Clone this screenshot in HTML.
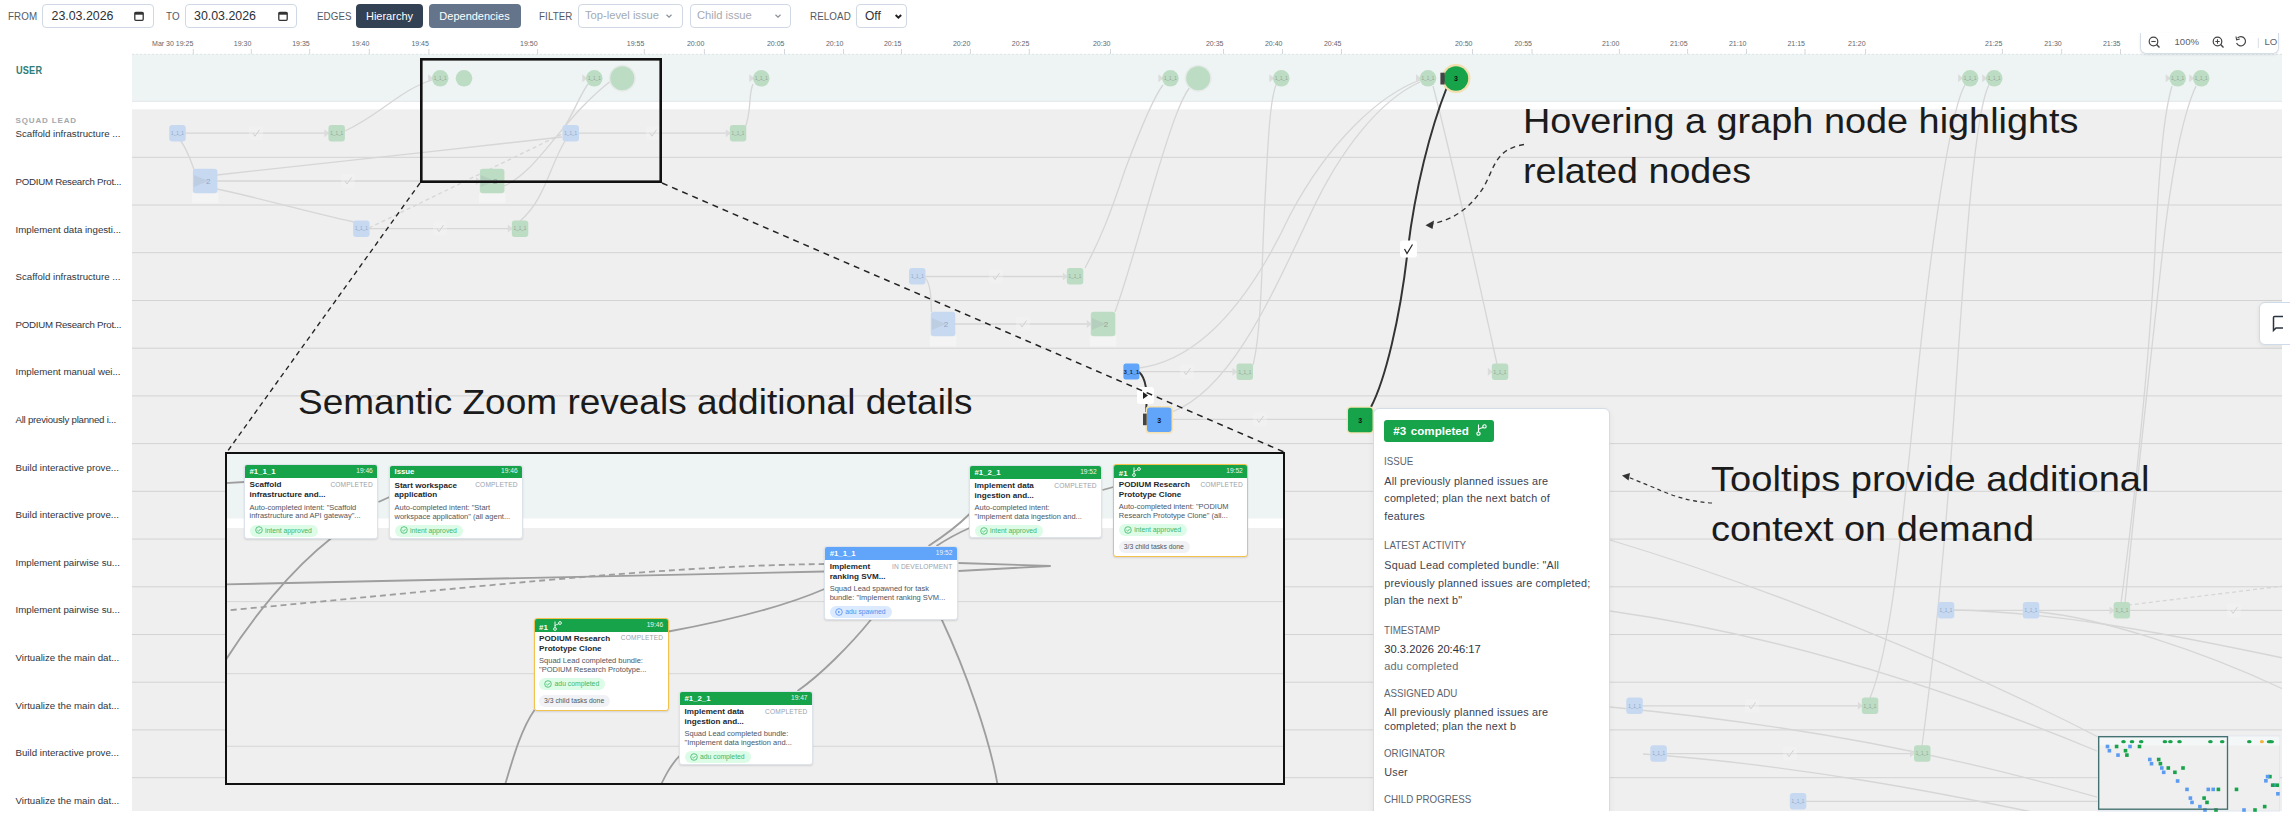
<!DOCTYPE html><html><head><meta charset="utf-8"><style>
*{margin:0;padding:0;box-sizing:border-box}
html,body{width:2290px;height:813px;overflow:hidden;background:#fff;font-family:"Liberation Sans",sans-serif;color:#374151}
.a{position:absolute;white-space:nowrap}
.lbl{font-size:11px;color:#525a66;letter-spacing:0.1px;transform:scaleX(0.89);transform-origin:0 0}
.inp{border:1px solid #cfd8e3;border-radius:4px;background:#fff}
.tick{font-size:7px;color:#62676e}
.rowlbl{font-size:9.7px;color:#30353c}
.ann{font-family:"Liberation Sans",sans-serif;font-size:34px;color:#1b1b1b;transform-origin:0 0}
</style></head><body>
<div class="a lbl" style="left:7.5px;top:10px">FROM</div>
<div class="a inp" style="left:42px;top:4px;width:112px;height:24px"></div>
<div class="a" style="left:51.5px;top:8.5px;font-size:12.4px;color:#2b2f36">23.03.2026</div>
<div class="a lbl" style="left:166px;top:10px">TO</div>
<div class="a inp" style="left:185px;top:4px;width:112px;height:24px"></div>
<div class="a" style="left:194px;top:8.5px;font-size:12.4px;color:#2b2f36">30.03.2026</div>
<svg class="a" style="left:134px;top:11px" width="10" height="10" viewBox="0 0 10 10"><rect x="0.8" y="1.3" width="8.4" height="8" rx="1" fill="none" stroke="#333" stroke-width="1.3"/><rect x="0.8" y="1.3" width="8.4" height="2.4" fill="#333"/></svg>
<svg class="a" style="left:277.5px;top:11px" width="10" height="10" viewBox="0 0 10 10"><rect x="0.8" y="1.3" width="8.4" height="8" rx="1" fill="none" stroke="#333" stroke-width="1.3"/><rect x="0.8" y="1.3" width="8.4" height="2.4" fill="#333"/></svg>
<div class="a lbl" style="left:316.5px;top:10px">EDGES</div>
<div class="a" style="left:356px;top:4px;width:67px;height:24px;background:#334155;border-radius:4px;color:#fff;font-size:11px;line-height:24px;text-align:center">Hierarchy</div>
<div class="a" style="left:428.5px;top:4px;width:92px;height:24px;background:#64748b;border-radius:4px;color:#fff;font-size:11px;line-height:24px;text-align:center">Dependencies</div>
<div class="a lbl" style="left:539px;top:10px">FILTER</div>
<div class="a inp" style="left:577.5px;top:4px;width:105px;height:24px"></div>
<div class="a" style="left:585px;top:9px;font-size:11.2px;color:#a4aab3">Top-level issue</div>
<div class="a inp" style="left:689.5px;top:4px;width:101px;height:24px"></div>
<div class="a" style="left:697px;top:9px;font-size:11.2px;color:#a4aab3">Child issue</div>
<svg class="a" style="left:665px;top:13px" width="8" height="6" viewBox="0 0 8 6"><path d="M1.5 1.8 L4 4.2 L6.5 1.8" fill="none" stroke="#8a9099" stroke-width="1.2"/></svg>
<svg class="a" style="left:773.5px;top:13px" width="8" height="6" viewBox="0 0 8 6"><path d="M1.5 1.8 L4 4.2 L6.5 1.8" fill="none" stroke="#8a9099" stroke-width="1.2"/></svg>
<div class="a lbl" style="left:809.5px;top:10px">RELOAD</div>
<div class="a inp" style="left:855.5px;top:4px;width:51px;height:24px"></div>
<div class="a" style="left:865px;top:8.5px;font-size:12px;color:#2b2f36">Off</div>
<svg class="a" style="left:893.5px;top:12.5px" width="8.8" height="6.6000000000000005" viewBox="0 0 8 6"><path d="M1.5 1.8 L4 4.2 L6.5 1.8" fill="none" stroke="#222" stroke-width="1.8"/></svg>
<div class="a tick" style="right:2096.7px;top:39.5px">Mar 30 19:25</div>
<div class="a tick" style="right:2038.7px;top:39.5px">19:30</div>
<div class="a tick" style="right:1980.3px;top:39.5px">19:35</div>
<div class="a tick" style="right:1920.7px;top:39.5px">19:40</div>
<div class="a tick" style="right:1861.1px;top:39.5px">19:45</div>
<div class="a tick" style="right:1752.4px;top:39.5px">19:50</div>
<div class="a tick" style="right:1645.7px;top:39.5px">19:55</div>
<div class="a tick" style="right:1585.6px;top:39.5px">20:00</div>
<div class="a tick" style="right:1505.5px;top:39.5px">20:05</div>
<div class="a tick" style="right:1446.5px;top:39.5px">20:10</div>
<div class="a tick" style="right:1388.5px;top:39.5px">20:15</div>
<div class="a tick" style="right:1319.6px;top:39.5px">20:20</div>
<div class="a tick" style="right:1260.7px;top:39.5px">20:25</div>
<div class="a tick" style="right:1179.5px;top:39.5px">20:30</div>
<div class="a tick" style="right:1066.5px;top:39.5px">20:35</div>
<div class="a tick" style="right:1007.5px;top:39.5px">20:40</div>
<div class="a tick" style="right:948.5px;top:39.5px">20:45</div>
<div class="a tick" style="right:817.5px;top:39.5px">20:50</div>
<div class="a tick" style="right:758px;top:39.5px">20:55</div>
<div class="a tick" style="right:670.5999999999999px;top:39.5px">21:00</div>
<div class="a tick" style="right:602.4000000000001px;top:39.5px">21:05</div>
<div class="a tick" style="right:543.5px;top:39.5px">21:10</div>
<div class="a tick" style="right:485px;top:39.5px">21:15</div>
<div class="a tick" style="right:424.4000000000001px;top:39.5px">21:20</div>
<div class="a tick" style="right:287.5999999999999px;top:39.5px">21:25</div>
<div class="a tick" style="right:228.30000000000018px;top:39.5px">21:30</div>
<div class="a tick" style="right:169.5px;top:39.5px">21:35</div>
<div class="a" style="left:15.5px;top:64.5px;font-size:10.2px;font-weight:bold;color:#2f7d78;letter-spacing:0.2px;transform:scaleX(0.9);transform-origin:0 0">USER</div>
<div class="a" style="left:15.5px;top:116.2px;font-size:8px;font-weight:bold;color:#a3a8ae;letter-spacing:0.85px">SQUAD LEAD</div>
<div class="a rowlbl" style="left:15.5px;top:128.4px">Scaffold infrastructure ...</div>
<div class="a rowlbl" style="left:15.5px;top:176.0px;letter-spacing:-0.25px">PODIUM Research Prot...</div>
<div class="a rowlbl" style="left:15.5px;top:223.6px">Implement data ingesti...</div>
<div class="a rowlbl" style="left:15.5px;top:271.2px">Scaffold infrastructure ...</div>
<div class="a rowlbl" style="left:15.5px;top:318.8px;letter-spacing:-0.25px">PODIUM Research Prot...</div>
<div class="a rowlbl" style="left:15.5px;top:366.4px">Implement manual wei...</div>
<div class="a rowlbl" style="left:15.5px;top:414.0px;letter-spacing:-0.25px">All previously planned i...</div>
<div class="a rowlbl" style="left:15.5px;top:461.6px">Build interactive prove...</div>
<div class="a rowlbl" style="left:15.5px;top:509.2px">Build interactive prove...</div>
<div class="a rowlbl" style="left:15.5px;top:556.8px">Implement pairwise su...</div>
<div class="a rowlbl" style="left:15.5px;top:604.4px">Implement pairwise su...</div>
<div class="a rowlbl" style="left:15.5px;top:652.0px">Virtualize the main dat...</div>
<div class="a rowlbl" style="left:15.5px;top:699.6px">Virtualize the main dat...</div>
<div class="a rowlbl" style="left:15.5px;top:747.2px">Build interactive prove...</div>
<div class="a rowlbl" style="left:15.5px;top:794.8px">Virtualize the main dat...</div>
<svg class="a" style="left:0;top:0" width="2290" height="813" viewBox="0 0 2290 813"><rect x="132" y="54" width="2150" height="48" fill="#eef3f3"/><line x1="132" y1="101.3" x2="2282" y2="101.3" stroke="#e4e8ea" stroke-width="1"/><rect x="132" y="102" width="2150" height="7.3" fill="#ffffff"/><rect x="132" y="109.3" width="2150" height="702" fill="#efefef"/><line x1="132" y1="54.3" x2="2283" y2="54.3" stroke="#d9dfe3" stroke-width="0.8" stroke-dasharray="2 2"/><line x1="193.3" y1="49" x2="193.3" y2="54" stroke="#c9cdd2" stroke-width="0.8"/><line x1="251.3" y1="49" x2="251.3" y2="54" stroke="#c9cdd2" stroke-width="0.8"/><line x1="309.7" y1="49" x2="309.7" y2="54" stroke="#c9cdd2" stroke-width="0.8"/><line x1="369.3" y1="49" x2="369.3" y2="54" stroke="#c9cdd2" stroke-width="0.8"/><line x1="428.9" y1="49" x2="428.9" y2="54" stroke="#c9cdd2" stroke-width="0.8"/><line x1="537.6" y1="49" x2="537.6" y2="54" stroke="#c9cdd2" stroke-width="0.8"/><line x1="644.3" y1="49" x2="644.3" y2="54" stroke="#c9cdd2" stroke-width="0.8"/><line x1="704.4" y1="49" x2="704.4" y2="54" stroke="#c9cdd2" stroke-width="0.8"/><line x1="784.5" y1="49" x2="784.5" y2="54" stroke="#c9cdd2" stroke-width="0.8"/><line x1="843.5" y1="49" x2="843.5" y2="54" stroke="#c9cdd2" stroke-width="0.8"/><line x1="901.5" y1="49" x2="901.5" y2="54" stroke="#c9cdd2" stroke-width="0.8"/><line x1="970.4" y1="49" x2="970.4" y2="54" stroke="#c9cdd2" stroke-width="0.8"/><line x1="1029.3" y1="49" x2="1029.3" y2="54" stroke="#c9cdd2" stroke-width="0.8"/><line x1="1110.5" y1="49" x2="1110.5" y2="54" stroke="#c9cdd2" stroke-width="0.8"/><line x1="1223.5" y1="49" x2="1223.5" y2="54" stroke="#c9cdd2" stroke-width="0.8"/><line x1="1282.5" y1="49" x2="1282.5" y2="54" stroke="#c9cdd2" stroke-width="0.8"/><line x1="1341.5" y1="49" x2="1341.5" y2="54" stroke="#c9cdd2" stroke-width="0.8"/><line x1="1472.5" y1="49" x2="1472.5" y2="54" stroke="#c9cdd2" stroke-width="0.8"/><line x1="1532" y1="49" x2="1532" y2="54" stroke="#c9cdd2" stroke-width="0.8"/><line x1="1619.4" y1="49" x2="1619.4" y2="54" stroke="#c9cdd2" stroke-width="0.8"/><line x1="1687.6" y1="49" x2="1687.6" y2="54" stroke="#c9cdd2" stroke-width="0.8"/><line x1="1746.5" y1="49" x2="1746.5" y2="54" stroke="#c9cdd2" stroke-width="0.8"/><line x1="1805" y1="49" x2="1805" y2="54" stroke="#c9cdd2" stroke-width="0.8"/><line x1="1865.6" y1="49" x2="1865.6" y2="54" stroke="#c9cdd2" stroke-width="0.8"/><line x1="2002.4" y1="49" x2="2002.4" y2="54" stroke="#c9cdd2" stroke-width="0.8"/><line x1="2061.7" y1="49" x2="2061.7" y2="54" stroke="#c9cdd2" stroke-width="0.8"/><line x1="2120.5" y1="49" x2="2120.5" y2="54" stroke="#c9cdd2" stroke-width="0.8"/><line x1="132" y1="157.3" x2="2283" y2="157.3" stroke="#d3d3d3" stroke-width="1"/><line x1="132" y1="205.0" x2="2283" y2="205.0" stroke="#d3d3d3" stroke-width="1"/><line x1="132" y1="252.7" x2="2283" y2="252.7" stroke="#d3d3d3" stroke-width="1"/><line x1="132" y1="300.5" x2="2283" y2="300.5" stroke="#d3d3d3" stroke-width="1"/><line x1="132" y1="348.2" x2="2283" y2="348.2" stroke="#d3d3d3" stroke-width="1"/><line x1="132" y1="395.9" x2="2283" y2="395.9" stroke="#d3d3d3" stroke-width="1"/><line x1="132" y1="443.6" x2="2283" y2="443.6" stroke="#d3d3d3" stroke-width="1"/><line x1="132" y1="491.3" x2="2283" y2="491.3" stroke="#d3d3d3" stroke-width="1"/><line x1="132" y1="539.1" x2="2283" y2="539.1" stroke="#d3d3d3" stroke-width="1"/><line x1="132" y1="586.8" x2="2283" y2="586.8" stroke="#d3d3d3" stroke-width="1"/><line x1="132" y1="634.5" x2="2283" y2="634.5" stroke="#d3d3d3" stroke-width="1"/><line x1="132" y1="682.2" x2="2283" y2="682.2" stroke="#d3d3d3" stroke-width="1"/><line x1="132" y1="729.9" x2="2283" y2="729.9" stroke="#d3d3d3" stroke-width="1"/><line x1="132" y1="777.7" x2="2283" y2="777.7" stroke="#d3d3d3" stroke-width="1"/></svg>
<svg class="a" style="left:0;top:0" width="2290" height="813" viewBox="0 0 2290 813"><path d="M185 133.2 L329 133.2" fill="none" stroke="#d6d6d6" stroke-width="1.3"/><rect x="249.0" y="126.2" width="14" height="14" rx="3" fill="#f5f5f5" opacity="0.35"/><path d="M253.0 133.2 L255.0 136.2 L259.5 129.7" fill="none" stroke="#d2d2d2" stroke-width="1"/><path d="M579 133.2 L730 133.2" fill="none" stroke="#d6d6d6" stroke-width="1.3"/><rect x="646.0" y="126.2" width="14" height="14" rx="3" fill="#f5f5f5" opacity="0.35"/><path d="M650.0 133.2 L652.0 136.2 L656.5 129.7" fill="none" stroke="#d2d2d2" stroke-width="1"/><path d="M217 181 L480 181" fill="none" stroke="#d6d6d6" stroke-width="1.3"/><rect x="341.0" y="174.0" width="14" height="14" rx="3" fill="#f5f5f5" opacity="0.35"/><path d="M345.0 181.0 L347.0 184.0 L351.5 177.5" fill="none" stroke="#d2d2d2" stroke-width="1"/><path d="M369 228.6 L512 228.6" fill="none" stroke="#d6d6d6" stroke-width="1.3"/><rect x="433.0" y="221.6" width="14" height="14" rx="3" fill="#f5f5f5" opacity="0.35"/><path d="M437.0 228.6 L439.0 231.6 L443.5 225.1" fill="none" stroke="#d2d2d2" stroke-width="1"/><path d="M925 276.5 L1067 276.5" fill="none" stroke="#d6d6d6" stroke-width="1.3"/><rect x="989.0" y="269.5" width="14" height="14" rx="3" fill="#f5f5f5" opacity="0.35"/><path d="M993.0 276.5 L995.0 279.5 L999.5 273.0" fill="none" stroke="#d2d2d2" stroke-width="1"/><path d="M955 324 L1091 324" fill="none" stroke="#d6d6d6" stroke-width="1.3"/><rect x="1016.0" y="317.0" width="14" height="14" rx="3" fill="#f5f5f5" opacity="0.35"/><path d="M1020.0 324.0 L1022.0 327.0 L1026.5 320.5" fill="none" stroke="#d2d2d2" stroke-width="1"/><path d="M1139 371.6 L1236 371.6" fill="none" stroke="#d6d6d6" stroke-width="1.3"/><rect x="1180.0" y="364.6" width="14" height="14" rx="3" fill="#f5f5f5" opacity="0.35"/><path d="M1184.0 371.6 L1186.0 374.6 L1190.5 368.1" fill="none" stroke="#d2d2d2" stroke-width="1"/><path d="M1172 419.4 L1348 419.4" fill="none" stroke="#d6d6d6" stroke-width="1.3"/><rect x="1253.0" y="412.4" width="14" height="14" rx="3" fill="#f5f5f5" opacity="0.35"/><path d="M1257.0 419.4 L1259.0 422.4 L1263.5 415.9" fill="none" stroke="#d2d2d2" stroke-width="1"/><path d="M1954 610.4 L2283 610.4" fill="none" stroke="#d6d6d6" stroke-width="1.3"/><path d="M2121 606 L2283 586" fill="none" stroke="#d6d6d6" stroke-width="1.3" stroke-dasharray="4 3"/><rect x="2227.0" y="603.4" width="14" height="14" rx="3" fill="#f5f5f5" opacity="0.35"/><path d="M2231.0 610.4 L2233.0 613.4 L2237.5 606.9" fill="none" stroke="#d2d2d2" stroke-width="1"/><path d="M1642 705.8 L1862 705.8" fill="none" stroke="#d6d6d6" stroke-width="1.3"/><rect x="1745.0" y="698.8" width="14" height="14" rx="3" fill="#f5f5f5" opacity="0.35"/><path d="M1749.0 705.8 L1751.0 708.8 L1755.5 702.3" fill="none" stroke="#d2d2d2" stroke-width="1"/><path d="M1666 753.6 L1914 753.6" fill="none" stroke="#d6d6d6" stroke-width="1.3"/><rect x="1783.0" y="746.6" width="14" height="14" rx="3" fill="#f5f5f5" opacity="0.35"/><path d="M1787.0 753.6 L1789.0 756.6 L1793.5 750.1" fill="none" stroke="#d2d2d2" stroke-width="1"/><path d="M1806 801.3 L2100 801.3" fill="none" stroke="#d6d6d6" stroke-width="1.3"/><path d="M345 131 C380 115 400 90 432 80" fill="none" stroke="#d6d6d6" stroke-width="1.3"/><path d="M745 128 C752 110 748 95 753 84" fill="none" stroke="#d6d6d6" stroke-width="1.3"/><path d="M565 126 C575 110 580 95 588 84" fill="none" stroke="#d6d6d6" stroke-width="1.3"/><path d="M504 186 C540 170 560 120 612 80" fill="none" stroke="#d6d6d6" stroke-width="1.3"/><path d="M520 221 C545 200 550 165 565 141" fill="none" stroke="#d6d6d6" stroke-width="1.3"/><path d="M217 175 C300 165 450 150 562 137" fill="none" stroke="#d6d6d6" stroke-width="1.3"/><path d="M369 228 L562 134" fill="none" stroke="#d6d6d6" stroke-width="1.3" stroke-dasharray="4 3"/><path d="M217 189 C260 198 300 210 354 222" fill="none" stroke="#d6d6d6" stroke-width="1.3"/><path d="M180 140 C188 150 192 165 195 172" fill="none" stroke="#d6d6d6" stroke-width="1.3"/><path d="M925 278 C931 283 931 300 931.5 312" fill="none" stroke="#d6d6d6" stroke-width="1.3"/><path d="M1085 268 C1100 240 1110 215 1125 170 C1140 130 1155 95 1163 85" fill="none" stroke="#d6d6d6" stroke-width="1.3"/><path d="M1115 312 C1130 270 1140 230 1155 180 C1170 130 1180 100 1190 87" fill="none" stroke="#d6d6d6" stroke-width="1.3"/><path d="M1253 365 C1262 330 1262 250 1265 200 C1268 140 1270 100 1276 85" fill="none" stroke="#d6d6d6" stroke-width="1.3"/><path d="M1139 368 C1200 360 1250 300 1290 215 C1330 140 1380 95 1420 80" fill="none" stroke="#d6d6d6" stroke-width="1.3"/><path d="M1172 412 C1230 390 1270 300 1310 215 C1340 150 1380 100 1420 82" fill="none" stroke="#d6d6d6" stroke-width="1.3"/><path d="M1433 86 C1450 150 1472 250 1497 364" fill="none" stroke="#d6d6d6" stroke-width="1.3"/><path d="M1870 698 C1890 650 1900 550 1915 400 C1930 250 1950 110 1965 85" fill="none" stroke="#d6d6d6" stroke-width="1.3"/><path d="M1922 746 C1935 650 1945 550 1955 400 C1965 250 1975 110 1989 85" fill="none" stroke="#d6d6d6" stroke-width="1.3"/><path d="M2121 603 C2135 500 2150 350 2155 250 C2160 150 2165 110 2172 86" fill="none" stroke="#d6d6d6" stroke-width="1.3"/><path d="M2125 603 C2140 450 2155 320 2165 230 C2175 150 2185 110 2196 86" fill="none" stroke="#d6d6d6" stroke-width="1.3"/><path d="M1610 540 C1760 585 1950 660 2104 740" fill="none" stroke="#d6d6d6" stroke-width="1.3"/><path d="M1610 611 C1780 635 1950 690 2097 751" fill="none" stroke="#d6d6d6" stroke-width="1.3"/><path d="M1610 707 C1800 725 1950 755 2097 797" fill="none" stroke="#d6d6d6" stroke-width="1.3"/><path d="M1643 754 C1800 765 1950 795 2032 812" fill="none" stroke="#d6d6d6" stroke-width="1.3"/><path d="M1954 610 C2050 612 2150 630 2283 658" fill="none" stroke="#d6d6d6" stroke-width="1.3"/><path d="M2039 612 C2100 618 2200 650 2283 689" fill="none" stroke="#d6d6d6" stroke-width="1.3"/><path d="M428.2 74.3 L433.2 78.3 L428.2 82.3 Z" fill="#dcdcdc"/><circle cx="440.2" cy="78.3" r="8.3" fill="#bddcc4"/><text x="440.2" y="80" font-size="4.6" text-anchor="middle" fill="#93a596" font-family="Liberation Sans">1_1_1</text><circle cx="464" cy="78.3" r="8.3" fill="#bddcc4"/><path d="M582.3 74.3 L587.3 78.3 L582.3 82.3 Z" fill="#dcdcdc"/><circle cx="594.3" cy="78.3" r="8.3" fill="#bddcc4"/><text x="594.3" y="80" font-size="4.6" text-anchor="middle" fill="#93a596" font-family="Liberation Sans">1_1_1</text><path d="M749.3 74.3 L754.3 78.3 L749.3 82.3 Z" fill="#dcdcdc"/><circle cx="761.3" cy="78.3" r="8.3" fill="#bddcc4"/><text x="761.3" y="80" font-size="4.6" text-anchor="middle" fill="#93a596" font-family="Liberation Sans">1_1_1</text><path d="M1158.4 74.3 L1163.4 78.3 L1158.4 82.3 Z" fill="#dcdcdc"/><circle cx="1170.4" cy="78.3" r="8.3" fill="#bddcc4"/><text x="1170.4" y="80" font-size="4.6" text-anchor="middle" fill="#93a596" font-family="Liberation Sans">1_1_1</text><path d="M1269.3 74.3 L1274.3 78.3 L1269.3 82.3 Z" fill="#dcdcdc"/><circle cx="1281.3" cy="78.3" r="8.3" fill="#bddcc4"/><text x="1281.3" y="80" font-size="4.6" text-anchor="middle" fill="#93a596" font-family="Liberation Sans">1_1_1</text><path d="M1416.0 74.3 L1421.0 78.3 L1416.0 82.3 Z" fill="#dcdcdc"/><circle cx="1428" cy="78.3" r="8.3" fill="#bddcc4"/><text x="1428" y="80" font-size="4.6" text-anchor="middle" fill="#93a596" font-family="Liberation Sans">1_1_1</text><path d="M1958.1 74.3 L1963.1 78.3 L1958.1 82.3 Z" fill="#dcdcdc"/><circle cx="1970.1" cy="78.3" r="8.3" fill="#bddcc4"/><text x="1970.1" y="80" font-size="4.6" text-anchor="middle" fill="#93a596" font-family="Liberation Sans">1_1_1</text><path d="M1982.2 74.3 L1987.2 78.3 L1982.2 82.3 Z" fill="#dcdcdc"/><circle cx="1994.2" cy="78.3" r="8.3" fill="#bddcc4"/><text x="1994.2" y="80" font-size="4.6" text-anchor="middle" fill="#93a596" font-family="Liberation Sans">1_1_1</text><path d="M2165.7 74.3 L2170.7 78.3 L2165.7 82.3 Z" fill="#dcdcdc"/><circle cx="2177.7" cy="78.3" r="8.3" fill="#bddcc4"/><text x="2177.7" y="80" font-size="4.6" text-anchor="middle" fill="#93a596" font-family="Liberation Sans">1_1_1</text><path d="M2189.2 74.3 L2194.2 78.3 L2189.2 82.3 Z" fill="#dcdcdc"/><circle cx="2201.2" cy="78.3" r="8.3" fill="#bddcc4"/><text x="2201.2" y="80" font-size="4.6" text-anchor="middle" fill="#93a596" font-family="Liberation Sans">1_1_1</text><circle cx="622.3" cy="78.3" r="13.5" fill="#e6ebea"/><circle cx="622.3" cy="78.3" r="12" fill="#bddcc4"/><circle cx="1198.2" cy="78.3" r="13.5" fill="#e6ebea"/><circle cx="1198.2" cy="78.3" r="12" fill="#bddcc4"/><rect x="169.2" y="124.9" width="16.5" height="16.5" rx="3" fill="#c7d9f1" /><text x="177.5" y="134.9" font-size="4.6" text-anchor="middle" fill="#8fa6c4" font-family="Liberation Sans">1_1_1</text><path d="M324.4 129.2 L329.4 133.2 L324.4 137.2 Z" fill="#dcdcdc"/><rect x="328.4" y="124.9" width="16.5" height="16.5" rx="3" fill="#bddcc4" /><text x="336.7" y="134.9" font-size="4.6" text-anchor="middle" fill="#93a596" font-family="Liberation Sans">1_1_1</text><rect x="562.5" y="124.9" width="16.5" height="16.5" rx="3" fill="#c7d9f1" /><text x="570.7" y="134.9" font-size="4.6" text-anchor="middle" fill="#8fa6c4" font-family="Liberation Sans">1_1_1</text><path d="M725.8 129.2 L730.8 133.2 L725.8 137.2 Z" fill="#dcdcdc"/><rect x="729.8" y="124.9" width="16.5" height="16.5" rx="3" fill="#bddcc4" /><text x="738" y="134.9" font-size="4.6" text-anchor="middle" fill="#93a596" font-family="Liberation Sans">1_1_1</text><rect x="191.9" y="193.2" width="26.5" height="10" fill="#f6f7f7" opacity="0.6"/><rect x="192.9" y="168.7" width="24.5" height="24.5" rx="3" fill="#c7d9f1" /><path d="M193.9 174.9 L208.2 180.9 L193.9 186.9 Z" fill="#9aa3ad" opacity="0.22"/><text x="208.2" y="183.7" font-size="8" text-anchor="middle" fill="#8fa6c4" font-family="Liberation Sans">2</text><path d="M475.9 176.9 L480.9 180.9 L475.9 184.9 Z" fill="#dcdcdc"/><rect x="478.9" y="193.2" width="26.5" height="10" fill="#f6f7f7" opacity="0.6"/><rect x="479.9" y="168.7" width="24.5" height="24.5" rx="3" fill="#bddcc4" /><path d="M480.9 174.9 L495.2 180.9 L480.9 186.9 Z" fill="#9aa3ad" opacity="0.22"/><text x="495.2" y="183.7" font-size="8" text-anchor="middle" fill="#93a596" font-family="Liberation Sans">2</text><rect x="353.1" y="220.4" width="16.5" height="16.5" rx="3" fill="#c7d9f1" /><text x="361.4" y="230.3" font-size="4.6" text-anchor="middle" fill="#8fa6c4" font-family="Liberation Sans">1_1_1</text><path d="M507.8 224.6 L512.8 228.6 L507.8 232.6 Z" fill="#dcdcdc"/><rect x="511.8" y="220.4" width="16.5" height="16.5" rx="3" fill="#bddcc4" /><text x="520" y="230.3" font-size="4.6" text-anchor="middle" fill="#93a596" font-family="Liberation Sans">1_1_1</text><rect x="909.0" y="268.1" width="16.5" height="16.5" rx="3" fill="#c7d9f1" /><text x="917.3" y="278.1" font-size="4.6" text-anchor="middle" fill="#8fa6c4" font-family="Liberation Sans">1_1_1</text><path d="M1062.8 272.4 L1067.8 276.4 L1062.8 280.4 Z" fill="#dcdcdc"/><rect x="1066.8" y="268.1" width="16.5" height="16.5" rx="3" fill="#bddcc4" /><text x="1075" y="278.1" font-size="4.6" text-anchor="middle" fill="#93a596" font-family="Liberation Sans">1_1_1</text><rect x="929.8" y="336.3" width="26.5" height="10" fill="#f6f7f7" opacity="0.6"/><rect x="930.8" y="311.8" width="24.5" height="24.5" rx="3" fill="#c7d9f1" /><path d="M931.8 318.1 L946.0 324.1 L931.8 330.1 Z" fill="#9aa3ad" opacity="0.22"/><text x="946" y="326.9" font-size="8" text-anchor="middle" fill="#8fa6c4" font-family="Liberation Sans">2</text><path d="M1086.8 320.1 L1091.8 324.1 L1086.8 328.1 Z" fill="#dcdcdc"/><rect x="1089.8" y="336.3" width="26.5" height="10" fill="#f6f7f7" opacity="0.6"/><rect x="1090.8" y="311.8" width="24.5" height="24.5" rx="3" fill="#bddcc4" /><path d="M1091.8 318.1 L1106.0 324.1 L1091.8 330.1 Z" fill="#9aa3ad" opacity="0.22"/><text x="1106" y="326.9" font-size="8" text-anchor="middle" fill="#93a596" font-family="Liberation Sans">2</text><path d="M1232.5 367.8 L1237.5 371.8 L1232.5 375.8 Z" fill="#dcdcdc"/><rect x="1236.5" y="363.5" width="16.5" height="16.5" rx="3" fill="#bddcc4" /><text x="1244.8" y="373.5" font-size="4.6" text-anchor="middle" fill="#93a596" font-family="Liberation Sans">1_1_1</text><path d="M1487.8 367.8 L1492.8 371.8 L1487.8 375.8 Z" fill="#dcdcdc"/><rect x="1491.8" y="363.5" width="16.5" height="16.5" rx="3" fill="#bddcc4" /><text x="1500" y="373.5" font-size="4.6" text-anchor="middle" fill="#93a596" font-family="Liberation Sans">1_1_1</text><rect x="1937.8" y="602.1" width="16.5" height="16.5" rx="3" fill="#c7d9f1" /><text x="1946" y="612.1" font-size="4.6" text-anchor="middle" fill="#8fa6c4" font-family="Liberation Sans">1_1_1</text><rect x="2022.8" y="602.1" width="16.5" height="16.5" rx="3" fill="#c7d9f1" /><text x="2031" y="612.1" font-size="4.6" text-anchor="middle" fill="#8fa6c4" font-family="Liberation Sans">1_1_1</text><path d="M2109.6 606.4 L2114.6 610.4 L2109.6 614.4 Z" fill="#dcdcdc"/><rect x="2113.6" y="602.1" width="16.5" height="16.5" rx="3" fill="#bddcc4" /><text x="2121.8" y="612.1" font-size="4.6" text-anchor="middle" fill="#93a596" font-family="Liberation Sans">1_1_1</text><rect x="1626.3" y="697.6" width="16.5" height="16.5" rx="3" fill="#c7d9f1" /><text x="1634.6" y="707.5" font-size="4.6" text-anchor="middle" fill="#8fa6c4" font-family="Liberation Sans">1_1_1</text><path d="M1857.8 701.8 L1862.8 705.8 L1857.8 709.8 Z" fill="#dcdcdc"/><rect x="1861.8" y="697.6" width="16.5" height="16.5" rx="3" fill="#bddcc4" /><text x="1870" y="707.5" font-size="4.6" text-anchor="middle" fill="#93a596" font-family="Liberation Sans">1_1_1</text><rect x="1650.3" y="745.3" width="16.5" height="16.5" rx="3" fill="#c7d9f1" /><text x="1658.6" y="755.3" font-size="4.6" text-anchor="middle" fill="#8fa6c4" font-family="Liberation Sans">1_1_1</text><path d="M1910.0 749.6 L1915.0 753.6 L1910.0 757.6 Z" fill="#dcdcdc"/><rect x="1914.0" y="745.3" width="16.5" height="16.5" rx="3" fill="#bddcc4" /><text x="1922.2" y="755.3" font-size="4.6" text-anchor="middle" fill="#93a596" font-family="Liberation Sans">1_1_1</text><rect x="1789.8" y="793.0" width="16.5" height="16.5" rx="3" fill="#c7d9f1" /><text x="1798" y="803.0" font-size="4.6" text-anchor="middle" fill="#8fa6c4" font-family="Liberation Sans">1_1_1</text></svg>
<svg class="a" style="left:0;top:0" width="2290" height="813" viewBox="0 0 2290 813"><path d="M1447 87 C1430 130 1415 190 1408 248 C1400 320 1385 380 1371 407" fill="none" stroke="#333" stroke-width="2"/><rect x="1400" y="240.5" width="17" height="17" rx="3" fill="#fff"/><path d="M1404.5 249 L1407 253.5 L1412.5 244.5" fill="none" stroke="#222" stroke-width="1.2"/><path d="M1139 372 C1146 378 1148 390 1146 412" fill="none" stroke="#333" stroke-width="2"/><rect x="1137" y="387" width="17" height="17" rx="3" fill="#fff"/><path d="M1143 392 L1148 395.5 L1143 399 Z" fill="#222"/><rect x="1123.4" y="363.6" width="16" height="16" rx="2.5" fill="#60a5fa" /><text x="1131.4" y="373.6" font-size="5.5" text-anchor="middle" fill="#1e293b" font-family="Liberation Sans" font-weight="bold">3_1_1</text><rect x="1145.5" y="406.1" width="27.5" height="27.5" rx="4" fill="#f6e2b0" /><rect x="1147.0" y="407.6" width="24.5" height="24.5" rx="3" fill="#60a5fa" /><rect x="1143" y="413.6" width="3.7" height="11.6" fill="#444"/><text x="1159.2" y="422.5" font-size="7" text-anchor="middle" fill="#111" font-family="Liberation Sans" font-weight="bold">3</text><rect x="1346.7" y="406.5" width="27" height="27" rx="4" fill="#f6e2b0" /><rect x="1348.0" y="407.8" width="24.5" height="24.5" rx="3" fill="#16a34a" /><text x="1360.2" y="422.5" font-size="7" text-anchor="middle" fill="#111" font-family="Liberation Sans" font-weight="bold">3</text><circle cx="1456" cy="78.5" r="14.5" fill="#f3dfae"/><circle cx="1456" cy="78.5" r="12.2" fill="#16a34a"/><rect x="1440.4" y="72.7" width="4.3" height="11.8" fill="#444"/><text x="1456" y="81" font-size="7" text-anchor="middle" fill="#111" font-family="Liberation Sans" font-weight="bold">3</text><path d="M1524 144.5 C1490 150 1495 175 1478 195 C1465 212 1450 220 1432 224" fill="none" stroke="#333" stroke-width="1.4" stroke-dasharray="5 4"/><path d="M1425.5 225.2 L1434 220.5 L1432.5 229 Z" fill="#333"/><path d="M1712 503 C1690 502 1670 495 1655 488 C1645 484 1635 480 1628 477" fill="none" stroke="#333" stroke-width="1.2" stroke-dasharray="4 3.5"/><path d="M1622 475.4 L1630 473 L1628.5 480.5 Z" fill="#333"/><rect x="421.3" y="59.3" width="239.4" height="122.4" fill="none" stroke="#111" stroke-width="2.6"/><path d="M420 183 L227 452" stroke="#222" stroke-width="1.35" stroke-dasharray="5 4" fill="none"/><path d="M662 183 L1284 452" stroke="#222" stroke-width="1.5" stroke-dasharray="6 5" fill="none"/></svg>
<div class="a ann" style="left:1523.0px;top:104.30px;font-size:34.5px;line-height:34.5px;transform:scaleX(1.0971)">Hovering a graph node highlights</div>
<div class="a ann" style="left:1523.0px;top:153.50px;font-size:34.5px;line-height:34.5px;transform:scaleX(1.0906)">related nodes</div>
<div class="a ann" style="left:297.8px;top:385.00px;font-size:34.5px;line-height:34.5px;transform:scaleX(1.0725)">Semantic Zoom reveals additional details</div>
<div class="a ann" style="left:1710.7px;top:461.90px;font-size:34.5px;line-height:34.5px;transform:scaleX(1.1045)">Tooltips provide additional</div>
<div class="a ann" style="left:1711.0px;top:511.70px;font-size:34.5px;line-height:34.5px;transform:scaleX(1.1008)">context on demand</div>
<div class="a" style="left:224.5px;top:452px;width:1060.1px;height:332.7px;overflow:hidden;background:#efefef">
<svg class="a" style="left:0;top:0" width="1060.1" height="332.7" viewBox="224.5 452 1060.1 332.7"><rect x="224.5" y="452" width="1100" height="66.5" fill="#eef3f3"/><rect x="224.5" y="518.5" width="1100" height="9.5" fill="#fff"/><line x1="224.5" y1="601.6" x2="1300" y2="601.6" stroke="#d6d6d6" stroke-width="1"/><line x1="224.5" y1="673.7" x2="1300" y2="673.7" stroke="#d6d6d6" stroke-width="1"/><line x1="224.5" y1="746.3" x2="1300" y2="746.3" stroke="#d6d6d6" stroke-width="1"/><path d="M220 483.5 L244 482" fill="none" stroke="#9e9e9e" stroke-width="1.8"/><path d="M378 502 L389 497" fill="none" stroke="#9e9e9e" stroke-width="1.8"/><path d="M222 665 C250 620 290 570 331 538" fill="none" stroke="#9e9e9e" stroke-width="1.8"/><path d="M220 584.5 C450 578 650 574 824 571.5" fill="none" stroke="#9e9e9e" stroke-width="1.8"/><path d="M220 611 C450 590 650 566 824 564" fill="none" stroke="#9e9e9e" stroke-width="1.8" stroke-dasharray="6 4"/><path d="M534 710 C520 730 512 760 503 790" fill="none" stroke="#9e9e9e" stroke-width="1.8"/><path d="M668 631.5 C720 622 780 608 824 589" fill="none" stroke="#9e9e9e" stroke-width="1.8"/><path d="M680 755 C670 765 665 775 658 790" fill="none" stroke="#9e9e9e" stroke-width="1.8"/><path d="M871 619 C850 645 820 675 797 691" fill="none" stroke="#9e9e9e" stroke-width="1.8"/><path d="M941 619 C965 670 990 740 998 790" fill="none" stroke="#9e9e9e" stroke-width="1.8"/><path d="M928 546 C945 535 958 525 969 514" fill="none" stroke="#9e9e9e" stroke-width="1.8"/><path d="M936 546 C948 538 960 532 969 528" fill="none" stroke="#9e9e9e" stroke-width="1.8"/><path d="M1102 490 L1113 487" fill="none" stroke="#9e9e9e" stroke-width="1.8"/><path d="M958 571 L1050 566" fill="none" stroke="#9e9e9e" stroke-width="1.8"/><path d="M958 563 L1050 566" fill="none" stroke="#9e9e9e" stroke-width="1.8"/></svg><div class="a" style="left:19.5px;top:12.4px;width:134.3px;height:74.3px;background:#fff;border:1px solid #dde3ea;border-radius:3px;box-shadow:0 1px 2px rgba(0,0,0,0.12);overflow:hidden"><div style="height:12.8px;background:#16a34a;color:#fff;position:relative"><span style="position:absolute;left:4.5px;top:1.8px;font-size:7.8px;font-weight:bold">#1_1_1</span><span style="position:absolute;right:4.5px;top:1.8px;font-size:6.6px;color:#e8f5ec">19:46</span></div><div style="position:relative;padding:2.2px 4.5px 0 4.5px"><div style="position:absolute;right:4.5px;top:2.6px;font-size:6.6px;color:#9aa1a9;letter-spacing:0.15px">COMPLETED</div><div style="font-size:8.1px;font-weight:bold;color:#23272e;line-height:9.7px">Scaffold<br>infrastructure and...</div><div style="font-size:7.5px;color:#4f5661;line-height:8.7px;margin-top:3.8px">Auto-completed intent: "Scaffold<br>infrastructure and API gateway"...</div><div style="margin-top:3.6px"><div style="display:block;width:fit-content;height:12px;line-height:12px;padding:0 6px 0 5px;border-radius:6px;background:#dcfce7;color:#3cb868;font-size:6.8px"><svg width="8" height="8" viewBox="0 0 8 8" style="vertical-align:-1.5px;margin-right:2.5px"><circle cx="4" cy="4" r="3.3" fill="none" stroke="#3cb868" stroke-width="0.8"/><path d="M2.4 4.1 L3.6 5.2 L5.6 3" fill="none" stroke="#3cb868" stroke-width="0.8"/></svg>intent approved</div></div></div></div><div class="a" style="left:164.5px;top:12.7px;width:134.1px;height:74.4px;background:#fff;border:1px solid #dde3ea;border-radius:3px;box-shadow:0 1px 2px rgba(0,0,0,0.12);overflow:hidden"><div style="height:12.8px;background:#16a34a;color:#fff;position:relative"><span style="position:absolute;left:4.5px;top:1.8px;font-size:7.8px;font-weight:bold">Issue</span><span style="position:absolute;right:4.5px;top:1.8px;font-size:6.6px;color:#e8f5ec">19:46</span></div><div style="position:relative;padding:2.2px 4.5px 0 4.5px"><div style="position:absolute;right:4.5px;top:2.6px;font-size:6.6px;color:#9aa1a9;letter-spacing:0.15px">COMPLETED</div><div style="font-size:8.1px;font-weight:bold;color:#23272e;line-height:9.7px">Start workspace<br>application</div><div style="font-size:7.5px;color:#4f5661;line-height:8.7px;margin-top:3.8px">Auto-completed intent: "Start<br>workspace application" (all agent...</div><div style="margin-top:3.6px"><div style="display:block;width:fit-content;height:12px;line-height:12px;padding:0 6px 0 5px;border-radius:6px;background:#dcfce7;color:#3cb868;font-size:6.8px"><svg width="8" height="8" viewBox="0 0 8 8" style="vertical-align:-1.5px;margin-right:2.5px"><circle cx="4" cy="4" r="3.3" fill="none" stroke="#3cb868" stroke-width="0.8"/><path d="M2.4 4.1 L3.6 5.2 L5.6 3" fill="none" stroke="#3cb868" stroke-width="0.8"/></svg>intent approved</div></div></div></div><div class="a" style="left:744.5px;top:13.2px;width:133.2px;height:73.1px;background:#fff;border:1px solid #dde3ea;border-radius:3px;box-shadow:0 1px 2px rgba(0,0,0,0.12);overflow:hidden"><div style="height:12.8px;background:#16a34a;color:#fff;position:relative"><span style="position:absolute;left:4.5px;top:1.8px;font-size:7.8px;font-weight:bold">#1_2_1</span><span style="position:absolute;right:4.5px;top:1.8px;font-size:6.6px;color:#e8f5ec">19:52</span></div><div style="position:relative;padding:2.2px 4.5px 0 4.5px"><div style="position:absolute;right:4.5px;top:2.6px;font-size:6.6px;color:#9aa1a9;letter-spacing:0.15px">COMPLETED</div><div style="font-size:8.1px;font-weight:bold;color:#23272e;line-height:9.7px">Implement data<br>ingestion and...</div><div style="font-size:7.5px;color:#4f5661;line-height:8.7px;margin-top:3.8px">Auto-completed intent:<br>"Implement data ingestion and...</div><div style="margin-top:3.6px"><div style="display:block;width:fit-content;height:12px;line-height:12px;padding:0 6px 0 5px;border-radius:6px;background:#dcfce7;color:#3cb868;font-size:6.8px"><svg width="8" height="8" viewBox="0 0 8 8" style="vertical-align:-1.5px;margin-right:2.5px"><circle cx="4" cy="4" r="3.3" fill="none" stroke="#3cb868" stroke-width="0.8"/><path d="M2.4 4.1 L3.6 5.2 L5.6 3" fill="none" stroke="#3cb868" stroke-width="0.8"/></svg>intent approved</div></div></div></div><div class="a" style="left:888.8px;top:12.3px;width:135.0px;height:93.0px;background:#fff;border:1.2px solid #f2c14e;border-radius:3px;box-shadow:0 1px 2px rgba(0,0,0,0.12);overflow:hidden"><div style="height:12.8px;background:#16a34a;color:#fff;position:relative"><span style="position:absolute;left:4.5px;top:1.8px;font-size:7.8px;font-weight:bold">#1<svg width="9" height="10" viewBox="0 0 9 10" style="vertical-align:-1px;margin-left:5px"><circle cx="2" cy="8" r="1.4" fill="none" stroke="#fff" stroke-width="0.9"/><circle cx="7" cy="2" r="1.4" fill="none" stroke="#fff" stroke-width="0.9"/><path d="M2 0.5 L2 6.6 M2 5 C2 3.5 5 3.5 5.8 2.8" fill="none" stroke="#fff" stroke-width="0.9"/></svg></span><span style="position:absolute;right:4.5px;top:1.8px;font-size:6.6px;color:#e8f5ec">19:52</span></div><div style="position:relative;padding:2.2px 4.5px 0 4.5px"><div style="position:absolute;right:4.5px;top:2.6px;font-size:6.6px;color:#9aa1a9;letter-spacing:0.15px">COMPLETED</div><div style="font-size:8.1px;font-weight:bold;color:#23272e;line-height:9.7px">PODIUM Research<br>Prototype Clone</div><div style="font-size:7.5px;color:#4f5661;line-height:8.7px;margin-top:3.8px">Auto-completed intent: "PODIUM<br>Research Prototype Clone" (all...</div><div style="margin-top:3.6px"><div style="display:block;width:fit-content;height:12px;line-height:12px;padding:0 6px 0 5px;border-radius:6px;background:#dcfce7;color:#3cb868;font-size:6.8px"><svg width="8" height="8" viewBox="0 0 8 8" style="vertical-align:-1.5px;margin-right:2.5px"><circle cx="4" cy="4" r="3.3" fill="none" stroke="#3cb868" stroke-width="0.8"/><path d="M2.4 4.1 L3.6 5.2 L5.6 3" fill="none" stroke="#3cb868" stroke-width="0.8"/></svg>intent approved</div></div><div style="margin-top:5px"><div style="display:block;width:fit-content;height:12px;line-height:12px;padding:0 6px 0 5px;border-radius:6px;background:#f0f2f5;color:#4b5563;font-size:6.8px">3/3 child tasks done</div></div></div></div><div class="a" style="left:599.7px;top:94.2px;width:133.7px;height:74.0px;background:#fff;border:1px solid #dde3ea;border-radius:3px;box-shadow:0 1px 2px rgba(0,0,0,0.12);overflow:hidden"><div style="height:12.8px;background:#60a5fa;color:#fff;position:relative"><span style="position:absolute;left:4.5px;top:1.8px;font-size:7.8px;font-weight:bold">#1_1_1</span><span style="position:absolute;right:4.5px;top:1.8px;font-size:6.6px;color:#e8f5ec">19:52</span></div><div style="position:relative;padding:2.2px 4.5px 0 4.5px"><div style="position:absolute;right:4.5px;top:2.6px;font-size:6.6px;color:#9aa1a9;letter-spacing:0.15px">IN DEVELOPMENT</div><div style="font-size:8.1px;font-weight:bold;color:#23272e;line-height:9.7px">Implement<br>ranking SVM...</div><div style="font-size:7.5px;color:#4f5661;line-height:8.7px;margin-top:3.8px">Squad Lead spawned for task<br>bundle: "Implement ranking SVM...</div><div style="margin-top:3.6px"><div style="display:block;width:fit-content;height:12px;line-height:12px;padding:0 6px 0 5px;border-radius:6px;background:#dbeafe;color:#4f8ff0;font-size:6.8px"><svg width="8" height="8" viewBox="0 0 8 8" style="vertical-align:-1.5px;margin-right:2.5px"><circle cx="4" cy="4" r="3.3" fill="none" stroke="#4f8ff0" stroke-width="0.8"/><path d="M3.2 2.7 L5.2 4 L3.2 5.3 Z" fill="#4f8ff0"/></svg>adu spawned</div></div></div></div><div class="a" style="left:309.1px;top:166.0px;width:135.1px;height:93.0px;background:#fff;border:1.2px solid #f2c14e;border-radius:3px;box-shadow:0 1px 2px rgba(0,0,0,0.12);overflow:hidden"><div style="height:12.8px;background:#16a34a;color:#fff;position:relative"><span style="position:absolute;left:4.5px;top:1.8px;font-size:7.8px;font-weight:bold">#1<svg width="9" height="10" viewBox="0 0 9 10" style="vertical-align:-1px;margin-left:5px"><circle cx="2" cy="8" r="1.4" fill="none" stroke="#fff" stroke-width="0.9"/><circle cx="7" cy="2" r="1.4" fill="none" stroke="#fff" stroke-width="0.9"/><path d="M2 0.5 L2 6.6 M2 5 C2 3.5 5 3.5 5.8 2.8" fill="none" stroke="#fff" stroke-width="0.9"/></svg></span><span style="position:absolute;right:4.5px;top:1.8px;font-size:6.6px;color:#e8f5ec">19:46</span></div><div style="position:relative;padding:2.2px 4.5px 0 4.5px"><div style="position:absolute;right:4.5px;top:2.6px;font-size:6.6px;color:#9aa1a9;letter-spacing:0.15px">COMPLETED</div><div style="font-size:8.1px;font-weight:bold;color:#23272e;line-height:9.7px">PODIUM Research<br>Prototype Clone</div><div style="font-size:7.5px;color:#4f5661;line-height:8.7px;margin-top:3.8px">Squad Lead completed bundle:<br>"PODIUM Research Prototype...</div><div style="margin-top:3.6px"><div style="display:block;width:fit-content;height:12px;line-height:12px;padding:0 6px 0 5px;border-radius:6px;background:#dcfce7;color:#3cb868;font-size:6.8px"><svg width="8" height="8" viewBox="0 0 8 8" style="vertical-align:-1.5px;margin-right:2.5px"><circle cx="4" cy="4" r="3.3" fill="none" stroke="#3cb868" stroke-width="0.8"/><path d="M2.4 4.1 L3.6 5.2 L5.6 3" fill="none" stroke="#3cb868" stroke-width="0.8"/></svg>adu completed</div></div><div style="margin-top:5px"><div style="display:block;width:fit-content;height:12px;line-height:12px;padding:0 6px 0 5px;border-radius:6px;background:#f0f2f5;color:#4b5563;font-size:6.8px">3/3 child tasks done</div></div></div></div><div class="a" style="left:454.5px;top:239.2px;width:134.0px;height:73.6px;background:#fff;border:1px solid #dde3ea;border-radius:3px;box-shadow:0 1px 2px rgba(0,0,0,0.12);overflow:hidden"><div style="height:12.8px;background:#16a34a;color:#fff;position:relative"><span style="position:absolute;left:4.5px;top:1.8px;font-size:7.8px;font-weight:bold">#1_2_1</span><span style="position:absolute;right:4.5px;top:1.8px;font-size:6.6px;color:#e8f5ec">19:47</span></div><div style="position:relative;padding:2.2px 4.5px 0 4.5px"><div style="position:absolute;right:4.5px;top:2.6px;font-size:6.6px;color:#9aa1a9;letter-spacing:0.15px">COMPLETED</div><div style="font-size:8.1px;font-weight:bold;color:#23272e;line-height:9.7px">Implement data<br>ingestion and...</div><div style="font-size:7.5px;color:#4f5661;line-height:8.7px;margin-top:3.8px">Squad Lead completed bundle:<br>"Implement data ingestion and...</div><div style="margin-top:3.6px"><div style="display:block;width:fit-content;height:12px;line-height:12px;padding:0 6px 0 5px;border-radius:6px;background:#dcfce7;color:#3cb868;font-size:6.8px"><svg width="8" height="8" viewBox="0 0 8 8" style="vertical-align:-1.5px;margin-right:2.5px"><circle cx="4" cy="4" r="3.3" fill="none" stroke="#3cb868" stroke-width="0.8"/><path d="M2.4 4.1 L3.6 5.2 L5.6 3" fill="none" stroke="#3cb868" stroke-width="0.8"/></svg>adu completed</div></div></div></div>
</div>
<div class="a" style="left:224.5px;top:452px;width:1060.1px;height:332.7px;border:2.6px solid #111"></div>
<div class="a" style="left:1372.5px;top:407.6px;width:237.5px;height:420px;background:#fff;border:1px solid #d3dde7;border-radius:6px;box-shadow:0 2px 6px rgba(0,0,0,0.06)"></div><div class="a" style="left:1384.2px;top:420.4px;width:109.6px;height:21.3px;background:#16a34a;border-radius:3px;color:#fff;font-size:11.6px;font-weight:bold;line-height:21.3px;padding-left:9px;word-spacing:1.5px">#3 completed<svg width="11" height="12" viewBox="0 0 9 10" style="vertical-align:-1px;margin-left:7px"><circle cx="2" cy="8" r="1.4" fill="none" stroke="#fff" stroke-width="0.9"/><circle cx="7" cy="2" r="1.4" fill="none" stroke="#fff" stroke-width="0.9"/><path d="M2 0.5 L2 6.6 M2 5 C2 3.5 5 3.5 5.8 2.8" fill="none" stroke="#fff" stroke-width="0.9"/></svg></div><div class="a" style="left:1384.3px;top:456.1px;font-size:10.5px;line-height:10.5px;color:#5b636e;transform:scaleX(0.93);transform-origin:0 0">ISSUE</div><div class="a" style="left:1384.3px;top:475.7px;font-size:10.8px;line-height:10.8px;color:#3b4250;letter-spacing:0.2px">All previously planned issues are</div><div class="a" style="left:1384.3px;top:493.3px;font-size:10.8px;line-height:10.8px;color:#3b4250;letter-spacing:0.2px">completed; plan the next batch of</div><div class="a" style="left:1384.3px;top:511.2px;font-size:10.8px;line-height:10.8px;color:#3b4250;letter-spacing:0.2px">features</div><div class="a" style="left:1384.3px;top:540.3px;font-size:10.5px;line-height:10.5px;color:#5b636e;transform:scaleX(0.93);transform-origin:0 0">LATEST ACTIVITY</div><div class="a" style="left:1384.3px;top:560.0px;font-size:10.8px;line-height:10.8px;color:#3b4250;letter-spacing:0.2px">Squad Lead completed bundle: "All</div><div class="a" style="left:1384.3px;top:577.8px;font-size:10.8px;line-height:10.8px;color:#3b4250;letter-spacing:0.2px">previously planned issues are completed;</div><div class="a" style="left:1384.3px;top:595.2px;font-size:10.8px;line-height:10.8px;color:#3b4250;letter-spacing:0.2px">plan the next b"</div><div class="a" style="left:1384.3px;top:625.1px;font-size:10.5px;line-height:10.5px;color:#5b636e;transform:scaleX(0.93);transform-origin:0 0">TIMESTAMP</div><div class="a" style="left:1384.3px;top:643.9px;font-size:11.2px;line-height:11.2px;color:#2e343d;">30.3.2026 20:46:17</div><div class="a" style="left:1384.3px;top:660.8px;font-size:11px;line-height:11px;color:#656c76;letter-spacing:0.15px">adu completed</div><div class="a" style="left:1384.3px;top:687.8px;font-size:10.5px;line-height:10.5px;color:#5b636e;transform:scaleX(0.93);transform-origin:0 0">ASSIGNED ADU</div><div class="a" style="left:1384.3px;top:706.6px;font-size:10.8px;line-height:10.8px;color:#3b4250;letter-spacing:0.2px">All previously planned issues are</div><div class="a" style="left:1384.3px;top:721.1px;font-size:10.8px;line-height:10.8px;color:#3b4250;letter-spacing:0.2px">completed; plan the next b</div><div class="a" style="left:1384.3px;top:748.2px;font-size:10.5px;line-height:10.5px;color:#5b636e;transform:scaleX(0.93);transform-origin:0 0">ORIGINATOR</div><div class="a" style="left:1384.3px;top:766.7px;font-size:10.8px;line-height:10.8px;color:#3b4250;letter-spacing:0.2px">User</div><div class="a" style="left:1384.3px;top:793.9px;font-size:10.5px;line-height:10.5px;color:#5b636e;transform:scaleX(0.93);transform-origin:0 0">CHILD PROGRESS</div>
<div class="a" style="left:0;top:811px;width:2290px;height:2px;background:#fff"></div>
<div class="a" style="left:2140.3px;top:33px;width:139px;height:20.8px;background:#fff;border:1px solid #d5dde6;border-top:none;border-radius:0 0 6px 6px;box-shadow:0 1px 3px rgba(0,0,0,0.08)"></div>
<svg class="a" style="left:2140px;top:30px" width="150" height="26" viewBox="0 0 150 26"><circle cx="13.5" cy="11.5" r="4.3" fill="none" stroke="#444" stroke-width="1.2"/><path d="M16.6 14.6 L19.5 17.5" stroke="#444" stroke-width="1.4"/><path d="M11.3 11.5 L15.7 11.5" stroke="#444" stroke-width="1.1"/><circle cx="77.5" cy="11.5" r="4.3" fill="none" stroke="#444" stroke-width="1.2"/><path d="M80.6 14.6 L83.5 17.5" stroke="#444" stroke-width="1.4"/><path d="M75.3 11.5 L79.7 11.5 M77.5 9.3 L77.5 13.7" stroke="#444" stroke-width="1.1"/><path d="M97.5 8.2 A4.6 4.6 0 1 1 96.6 13" fill="none" stroke="#444" stroke-width="1.2"/><path d="M96 6.5 L96.6 9.8 L99.8 9" fill="none" stroke="#444" stroke-width="1.1"/><line x1="118.3" y1="8" x2="118.3" y2="18" stroke="#cfd6de" stroke-width="0.8"/></svg>
<div class="a" style="left:2174.5px;top:36px;font-size:9.6px;color:#5a616b">100%</div>
<div class="a" style="left:2264.5px;top:36px;font-size:9.6px;color:#5a616b">LO</div>
<div class="a" style="left:2259.4px;top:302px;width:40px;height:43px;background:#fff;border:1px solid #cfdbe8;border-radius:6px 0 0 6px;box-shadow:0 1px 4px rgba(0,0,0,0.08)"></div>
<svg class="a" style="left:2272px;top:314px" width="18" height="20" viewBox="0 0 18 20"><path d="M11 2.5 L2.5 2.5 C1.8 2.5 1.5 2.8 1.5 3.5 L1.5 16.5 L4 14 L11 14" fill="none" stroke="#2a3340" stroke-width="1.5"/></svg>
<div class="a" style="left:2282px;top:54px;width:8px;height:248px;background:#fff"></div>
<div class="a" style="left:2282px;top:345px;width:8px;height:470px;background:#fff"></div>
<svg class="a" style="left:2095px;top:733px" width="195" height="80" viewBox="2095 733 195 80"><rect x="2098" y="736" width="181.6" height="75" fill="#efefef" stroke="#dfe6ee" stroke-width="1"/><rect x="2098.5" y="736.5" width="181" height="9" fill="#f4f7f7"/><ellipse cx="2123.5" cy="741.7" rx="2.3" ry="1.6" fill="#16a34a"/><ellipse cx="2132" cy="741.7" rx="2.3" ry="1.6" fill="#16a34a"/><ellipse cx="2141.2" cy="741.7" rx="2.3" ry="1.6" fill="#16a34a"/><ellipse cx="2164.9" cy="741.7" rx="2.3" ry="1.6" fill="#16a34a"/><ellipse cx="2170.4" cy="741.7" rx="2.3" ry="1.6" fill="#16a34a"/><ellipse cx="2179.5" cy="741.7" rx="2.3" ry="1.6" fill="#16a34a"/><ellipse cx="2210.4" cy="741.7" rx="2.3" ry="1.6" fill="#16a34a"/><ellipse cx="2222.2" cy="741.7" rx="2.3" ry="1.6" fill="#16a34a"/><ellipse cx="2249.3" cy="741.7" rx="2.3" ry="1.6" fill="#16a34a"/><ellipse cx="2261.9" cy="741.7" rx="2" ry="1.6" fill="#f0b43c"/><ellipse cx="2270.4" cy="741.7" rx="3.6" ry="1.6" fill="#16a34a"/><rect x="2105.7" y="744.7" width="3.6" height="3.6" fill="#5b9cf0"/><rect x="2114.8" y="744.7" width="3.6" height="3.6" fill="#16a34a"/><rect x="2128.2" y="744.7" width="3.6" height="3.6" fill="#5b9cf0"/><rect x="2137.7" y="744.7" width="3.6" height="3.6" fill="#16a34a"/><rect x="2107.6" y="748.9" width="3.6" height="3.6" fill="#5b9cf0"/><rect x="2123.7" y="748.9" width="3.6" height="3.6" fill="#16a34a"/><rect x="2116.2" y="753.3" width="3.6" height="3.6" fill="#5b9cf0"/><rect x="2125.1" y="753.3" width="3.6" height="3.6" fill="#16a34a"/><rect x="2148.0" y="757.7" width="3.6" height="3.6" fill="#5b9cf0"/><rect x="2156.9" y="757.7" width="3.6" height="3.6" fill="#16a34a"/><rect x="2149.7" y="761.9" width="3.6" height="3.6" fill="#5b9cf0"/><rect x="2158.6" y="761.9" width="3.6" height="3.6" fill="#16a34a"/><rect x="2160.0" y="766.2" width="3.6" height="3.6" fill="#5b9cf0"/><rect x="2166.5" y="766.2" width="3.6" height="3.6" fill="#16a34a"/><rect x="2181.2" y="766.2" width="3.6" height="3.6" fill="#16a34a"/><rect x="2161.9" y="770.5" width="3.6" height="3.6" fill="#5b9cf0"/><rect x="2173.1" y="770.5" width="3.6" height="3.6" fill="#16a34a"/><rect x="2175.8" y="779.2" width="3.6" height="3.6" fill="#5b9cf0"/><rect x="2185.2" y="787.6" width="3.6" height="3.6" fill="#5b9cf0"/><rect x="2206.5" y="787.6" width="3.6" height="3.6" fill="#5b9cf0"/><rect x="2211.4" y="787.6" width="3.6" height="3.6" fill="#5b9cf0"/><rect x="2216.6" y="787.6" width="3.6" height="3.6" fill="#16a34a"/><rect x="2234.7" y="787.6" width="3.6" height="3.6" fill="#16a34a"/><rect x="2188.6" y="796.3" width="3.6" height="3.6" fill="#5b9cf0"/><rect x="2202.3" y="796.3" width="3.6" height="3.6" fill="#16a34a"/><rect x="2190.2" y="800.6" width="3.6" height="3.6" fill="#5b9cf0"/><rect x="2205.2" y="800.6" width="3.6" height="3.6" fill="#16a34a"/><rect x="2198.1" y="804.8" width="3.6" height="3.6" fill="#5b9cf0"/><rect x="2262.9" y="804.8" width="3.6" height="3.6" fill="#16a34a"/><rect x="2264.1" y="779.0" width="3.6" height="3.6" fill="#5b9cf0"/><rect x="2268.1" y="774.8" width="3.6" height="3.6" fill="#16a34a"/><rect x="2265.8" y="774.8" width="3.6" height="3.6" fill="#5b9cf0"/><rect x="2272.6" y="783.4" width="3.6" height="3.6" fill="#5b9cf0"/><rect x="2270.9" y="783.4" width="3.6" height="3.6" fill="#16a34a"/><rect x="2275.5" y="783.4" width="3.6" height="3.6" fill="#16a34a"/><rect x="2276.1" y="792.0" width="3.6" height="3.6" fill="#5b9cf0"/><rect x="2203.2" y="808.2" width="3.6" height="3.6" fill="#5b9cf0"/><rect x="2214.2" y="808.2" width="3.6" height="3.6" fill="#16a34a"/><rect x="2242.2" y="808.2" width="3.6" height="3.6" fill="#5b9cf0"/><rect x="2253.2" y="808.2" width="3.6" height="3.6" fill="#16a34a"/><rect x="2098.7" y="736.7" width="128.8" height="72.5" fill="none" stroke="#41706f" stroke-width="1.35"/></svg>
</body></html>
